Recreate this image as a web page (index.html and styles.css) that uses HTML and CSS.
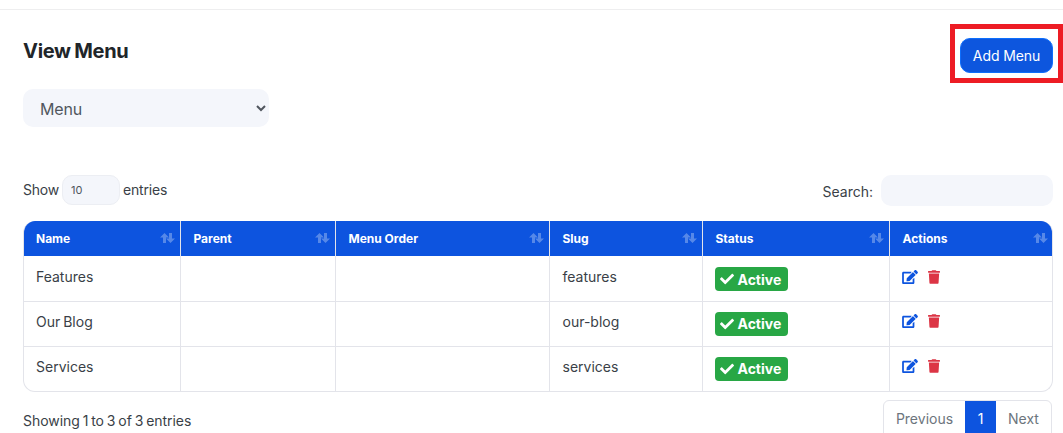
FILE: index.html
```html
<!DOCTYPE html>
<html lang="en">
<head>
<meta charset="utf-8">
<title>View Menu</title>
<link rel="stylesheet" href="styles.css">
</head>
<body>
<svg class="defs" width="0" height="0" aria-hidden="true">
  <symbol id="sort" viewBox="0 0 15 10"><path d="M4.500 0 9 4.500H6V10H3V4.500H0zM10.500 10 6 5.500H9V0h3v5.500h3z"/></symbol>
  <symbol id="check" viewBox="0 0 512 512"><path d="M173.898 439.404l-166.4-166.4c-9.997-9.997-9.997-26.206 0-36.204l36.203-36.204c9.997-9.998 26.207-9.998 36.204 0L192 312.69 432.095 72.596c9.997-9.997 26.207-9.997 36.204 0l36.203 36.204c9.997 9.997 9.997 26.206 0 36.204l-294.4 294.401c-9.998 9.997-26.207 9.997-36.204-.001z"/></symbol>
  <symbol id="edit" viewBox="0 0 576 512"><path d="M402.600 83.200l90.200 90.200c3.800 3.800 3.800 10 0 13.800L274.400 405.600l-92.800 10.300c-12.400 1.400-22.900-9.100-21.500-21.500l10.300-92.800L388.800 83.200c3.800-3.800 10-3.800 13.800 0zm162-22.900l-48.800-48.800c-15.200-15.200-39.900-15.200-55.200 0l-35.400 35.400c-3.800 3.800-3.800 10 0 13.800l90.200 90.200c3.800 3.800 10 3.800 13.800 0l35.400-35.400c15.200-15.300 15.200-40 0-55.200zM384 346.200V448H64V128h229.800c3.200 0 6.200-1.300 8.500-3.500l40-40c7.600-7.600 2.200-20.500-8.500-20.500H48C21.500 64 0 85.500 0 112v352c0 26.500 21.500 48 48 48h352c26.500 0 48-21.500 48-48V306.200c0-10.700-12.900-16-20.500-8.500l-40 40c-2.200 2.300-3.500 5.300-3.500 8.500z"/></symbol>
  <symbol id="trash" viewBox="0 0 448 512"><path d="M432 32H312l-9.400-18.700A24 24 0 0 0 281.100 0H166.800a23.720 23.720 0 0 0-21.400 13.300L136 32H16A16 16 0 0 0 0 48v32a16 16 0 0 0 16 16h416a16 16 0 0 0 16-16V48a16 16 0 0 0-16-16zM53.200 467a48 48 0 0 0 47.900 45h245.800a48 48 0 0 0 47.900-45L416 128H32z"/></symbol>
</svg>
<div class="topline"></div>
<main class="content">
  <header class="title-row">
    <div class="title-col">
      <h1 class="title">View Menu</h1>
      <select class="menu-select"><option>Menu</option></select>
    </div>
    <div class="add-wrap">
      <button class="add-btn" type="button">Add Menu</button>
      <span class="highlight"></span>
    </div>
  </header>

  <div class="controls">
    <label class="length"><span class="length-text">Show</span> <input class="length-input" type="text" value="10"> <span class="length-text">entries</span></label>
    <label class="search"><span class="search-text">Search:</span> <input class="search-input" type="text"></label>
  </div>

  <div class="table-wrap">
    <table class="table">
      <colgroup>
        <col class="c1"><col class="c2"><col class="c3"><col class="c4"><col class="c5"><col class="c6">
      </colgroup>
      <thead>
        <tr>
          <th>Name<svg class="sort"><use href="#sort"/></svg></th>
          <th>Parent<svg class="sort"><use href="#sort"/></svg></th>
          <th>Menu Order<svg class="sort"><use href="#sort"/></svg></th>
          <th>Slug<svg class="sort"><use href="#sort"/></svg></th>
          <th>Status<svg class="sort"><use href="#sort"/></svg></th>
          <th>Actions<svg class="sort"><use href="#sort"/></svg></th>
        </tr>
      </thead>
      <tbody>
        <tr>
          <td>Features</td><td></td><td></td><td>features</td>
          <td><span class="badge"><svg class="i-check"><use href="#check"/></svg>Active</span></td>
          <td><span class="actions"><svg class="i-edit"><use href="#edit"/></svg><svg class="i-trash"><use href="#trash"/></svg></span></td>
        </tr>
        <tr>
          <td>Our Blog</td><td></td><td></td><td>our-blog</td>
          <td><span class="badge"><svg class="i-check"><use href="#check"/></svg>Active</span></td>
          <td><span class="actions"><svg class="i-edit"><use href="#edit"/></svg><svg class="i-trash"><use href="#trash"/></svg></span></td>
        </tr>
        <tr>
          <td>Services</td><td></td><td></td><td>services</td>
          <td><span class="badge"><svg class="i-check"><use href="#check"/></svg>Active</span></td>
          <td><span class="actions"><svg class="i-edit"><use href="#edit"/></svg><svg class="i-trash"><use href="#trash"/></svg></span></td>
        </tr>
      </tbody>
    </table>
  </div>

  <footer class="table-foot">
    <div class="info">Showing 1 to 3 of 3 entries</div>
    <nav class="pager">
      <a class="page page-prev">Previous</a>
      <a class="page page-num">1</a>
      <a class="page page-next">Next</a>
    </nav>
  </footer>
</main>
</body>
</html>
```
FILE: styles.css
```css
* { box-sizing: border-box; }
html, body { height: 433px; overflow: hidden; }
body {
  margin: 0;
  background: #fff;
  color: #3a3f47;
  font-family: "Inter", "Liberation Sans", sans-serif;
  font-size: 14px;
}
.defs { display: block; height: 0; }
.topline { height: 10px; border-bottom: 1px solid #eeeeef; }
.content { padding: 0 10px 0 23px; }

.title-row { display: flex; justify-content: space-between; align-items: flex-start; }
.title-col { display: flex; flex-direction: column; align-items: flex-start; }
.title {
  margin: 29px 0 0;
  height: 50px;
  font-size: 20px;
  line-height: 24px;
  font-weight: 700;
  letter-spacing: -0.3px;
  word-spacing: -1px;
  color: #212529;
}
.menu-select {
  width: 246px;
  height: 38px;
  padding: 2px 13px 0;
  border: 0;
  border-radius: 10px;
  background-color: #f4f6fb;
  color: #50565e;
  font-family: inherit;
  font-size: 16px;
  letter-spacing: -0.2px;
}

.add-wrap { position: relative; margin-top: 28px; }
.add-btn {
  display: block;
  width: 93px;
  height: 35px;
  padding: 0;
  border: 1px solid #0d6efd;
  border-radius: 10px;
  background: #0d56de;
  color: #fff;
  font-family: inherit;
  font-size: 14px;
  letter-spacing: -0.1px;
}
.highlight {
  position: absolute;
  left: -10px;
  top: -14px;
  width: 113px;
  height: 59px;
  border: 5px solid #ed1c24;
}

.controls {
  display: flex;
  justify-content: space-between;
  align-items: flex-start;
  margin-top: 48px;
  height: 46px;
}
.length { display: flex; align-items: center; gap: 3px; height: 30px; letter-spacing: -0.2px; }
.length-text { margin-top: -2px; }
.length-input {
  width: 58px;
  height: 30px;
  margin: 0;
  padding: 0 8px;
  border: 1px solid #eceef3;
  border-radius: 10px;
  background: #f4f6fb;
  color: #50565e;
  font-family: inherit;
  font-size: 11px;
}
.search { display: flex; align-items: center; gap: 8px; height: 31px; }
.search-text { margin-top: 2px; }
.search-input {
  width: 172px;
  height: 31px;
  border: 0;
  border-radius: 10px;
  background: #f4f6fb;
}

.table-wrap {
  border: 1px solid #e3e4ea;
  border-top: 0;
  border-radius: 12px;
  overflow: hidden;
}
.table { width: 1030px; margin-left: -1px; border-collapse: collapse; table-layout: fixed; }
.c1 { width: 157px; } .c2 { width: 155px; } .c3 { width: 214px; }
.c4 { width: 153px; } .c5 { width: 187px; } .c6 { width: 164px; }
th {
  position: relative;
  height: 35px;
  padding: 0 13px;
  border-right: 1px solid #e3e4ea;
  background: #0d54df;
  color: #fff;
  font-size: 12px;
  font-weight: 700;
  text-align: left;
}
th:last-child, td:last-child { border-right: 0; }
.sort {
  position: absolute;
  right: 5px;
  top: 12px;
  width: 15px;
  height: 10px;
  fill: #fff;
  opacity: .3;
}
td {
  height: 45px;
  padding: 0 13px 5px;
  border-right: 1px solid #e3e4ea;
  border-bottom: 1px solid #e3e4ea;
  color: #3a3f47;
  font-size: 14px;
  word-spacing: -1px;
}
tbody tr:first-child td { padding-bottom: 3px; }
tbody tr:last-child td { border-bottom: 0; }
.badge {
  display: inline-flex;
  align-items: center;
  gap: 4px;
  width: 73px;
  height: 24px;
  padding-left: 5px;
  margin: 5px 0 0 -1px;
  border-radius: 4px;
  background: #28a745;
  color: #fff;
  font-size: 14px;
  font-weight: 700;
  vertical-align: middle;
}
.i-check { width: 14px; height: 14px; fill: #fff; }
.actions { display: flex; align-items: center; gap: 10px; margin-left: -1px; }
.i-edit { width: 16px; height: 14px; fill: #0d54df; }
.i-trash { width: 12px; height: 14px; fill: #dc3545; }

.table-foot { display: flex; justify-content: space-between; align-items: flex-start; margin-top: 8px; }
.info { margin-top: 12px; line-height: 17px; letter-spacing: -0.05px; word-spacing: -1px; }
.pager {
  display: flex;
  height: 40px;
  margin-right: 1px;
  border: 1px solid #e3e4ea;
  border-radius: 6px 6px 0 0;
  overflow: hidden;
  color: #6c757d;
  font-size: 14px;
}
.page { display: flex; align-items: flex-start; padding-top: 9px; justify-content: center; }
.page-prev { width: 81px; }
.page-num { width: 31px; background: #0d54df; color: #fff; }
.page-next { width: 55px; }
```
